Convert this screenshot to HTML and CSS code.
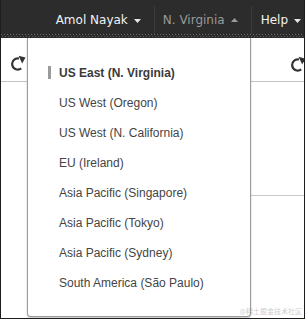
FILE: index.html
```html
<!DOCTYPE html>
<html>
<head>
<meta charset="utf-8">
<link rel="stylesheet" href="styles.css">
</head>
<body>
<div class="frame">
  <header class="topbar">
    <div class="nav-item user">Amol Nayak<svg class="caret" width="7" height="4" viewBox="0 0 7 4"><path d="M0 0H7L3.5 4Z"/></svg></div>
    <div class="nav-item region">N. Virginia<svg class="caret" width="7" height="4" viewBox="0 0 7 4"><path d="M0 4H7L3.5 0Z"/></svg></div>
    <div class="nav-item help">Help<svg class="caret" width="7" height="4" viewBox="0 0 7 4"><path d="M0 0H7L3.5 4Z"/></svg></div>
  </header>
  <div class="toolbar">
    <svg class="refresh" width="16" height="16" viewBox="0 0 16 16"><path d="M9 3.5A5.6 5.6 0 1 0 11.2 13.4" fill="none" stroke="#333" stroke-width="2.2"/><polygon points="8.5,0.8 15.5,2.6 12.2,8.6" fill="#333"/></svg>
    <svg class="refresh right" width="16" height="16" viewBox="0 0 16 16"><path d="M9 3.5A5.6 5.6 0 1 0 11.2 13.4" fill="none" stroke="#333" stroke-width="2.2"/><polygon points="8.5,0.8 15.5,2.6 12.2,8.6" fill="#333"/></svg>
  </div>
  <div class="content">
    <div class="gutter"></div>
    <div class="panel"></div>
  </div>
  <ul class="region-menu">
    <li class="active">US East (N. Virginia)</li>
    <li>US West (Oregon)</li>
    <li>US West (N. California)</li>
    <li>EU (Ireland)</li>
    <li>Asia Pacific (Singapore)</li>
    <li>Asia Pacific (Tokyo)</li>
    <li>Asia Pacific (Sydney)</li>
    <li>South America (São Paulo)</li>
  </ul>
  <span class="watermark">@稀土掘金技术社区</span>
</div>
</body>
</html>
```
FILE: styles.css
```css
* { box-sizing: border-box; }
html, body { margin: 0; padding: 0; background: #fff; }
.frame {
  position: relative;
  width: 305px;
  height: 319px;
  border: 1px solid #1c1c1c;
  border-top: none;
  overflow: hidden;
  background: #fff;
}
.topbar {
  height: 38px;
  display: flex;
  justify-content: flex-end;
  align-items: flex-start;
  background:
    repeating-linear-gradient(90deg, #6a6a6a 0 1px, transparent 1px 3px) 0 34px / 100% 1px no-repeat,
    repeating-linear-gradient(90deg, transparent 0 1px, #5a5a5a 1px 2px, transparent 2px 3px) 0 36px / 100% 1px no-repeat,
    #2c2c2c;
  font-family: "DejaVu Sans", Verdana, sans-serif;
  font-size: 12px;
}
.nav-item {
  display: flex;
  align-items: center;
  gap: 6px;
  height: 28px;
  margin-top: 6px;
  padding: 0 13px 0 9px;
  line-height: 14px;
  color: #f2f2f2;
}
.nav-item + .nav-item { border-left: 1px solid #3b3b3b; }
.nav-item .caret { fill: #e8e8e8; margin-top: 1px; }
.region { color: #9a9a9a; padding-left: 8px; }
.region .caret { fill: #9a9a9a; margin-top: -1px; }
.help { padding-right: 3px; }
.toolbar {
  height: 44px;
  display: flex;
  justify-content: space-between;
  align-items: flex-start;
  padding: 17px 0 0 9px;
  border-bottom: 1px solid #c4c4c4;
}
.refresh.right { margin-right: -2px; margin-top: 1px; }
.content {
  display: grid;
  grid-template-columns: 26px 1fr;
}
.panel {
  height: 114px;
  border-bottom: 1px solid #c8c8c8;
}
.region-menu {
  position: absolute;
  left: 26px;
  top: 38px;
  width: 224px;
  height: 279px;
  margin: 0;
  padding: 20px 0 0 0;
  list-style: none;
  background: #fff;
  border: 1px solid #9c9c9c;
  border-top: none;
  border-radius: 0 0 4px 4px;
  box-shadow: 0 1px 2px rgba(0, 0, 0, 0.25);
  font-family: "Liberation Sans", Arial, sans-serif;
  font-size: 12px;
  color: #444;
}
.region-menu li {
  position: relative;
  height: 30px;
  line-height: 30px;
  padding-left: 31px;
  white-space: nowrap;
}
.region-menu li.active {
  font-weight: bold;
  color: #3a3a3a;
}
.region-menu li.active::before {
  content: "";
  position: absolute;
  left: 20px;
  top: 8px;
  width: 3px;
  height: 13px;
  background: #9a9a9a;
}
.watermark {
  position: absolute;
  right: 2px;
  bottom: 3px;
  font-family: "Noto Sans CJK SC", sans-serif;
  font-size: 7px;
  line-height: 8px;
  color: rgba(160, 160, 160, 0.55);
}
```
